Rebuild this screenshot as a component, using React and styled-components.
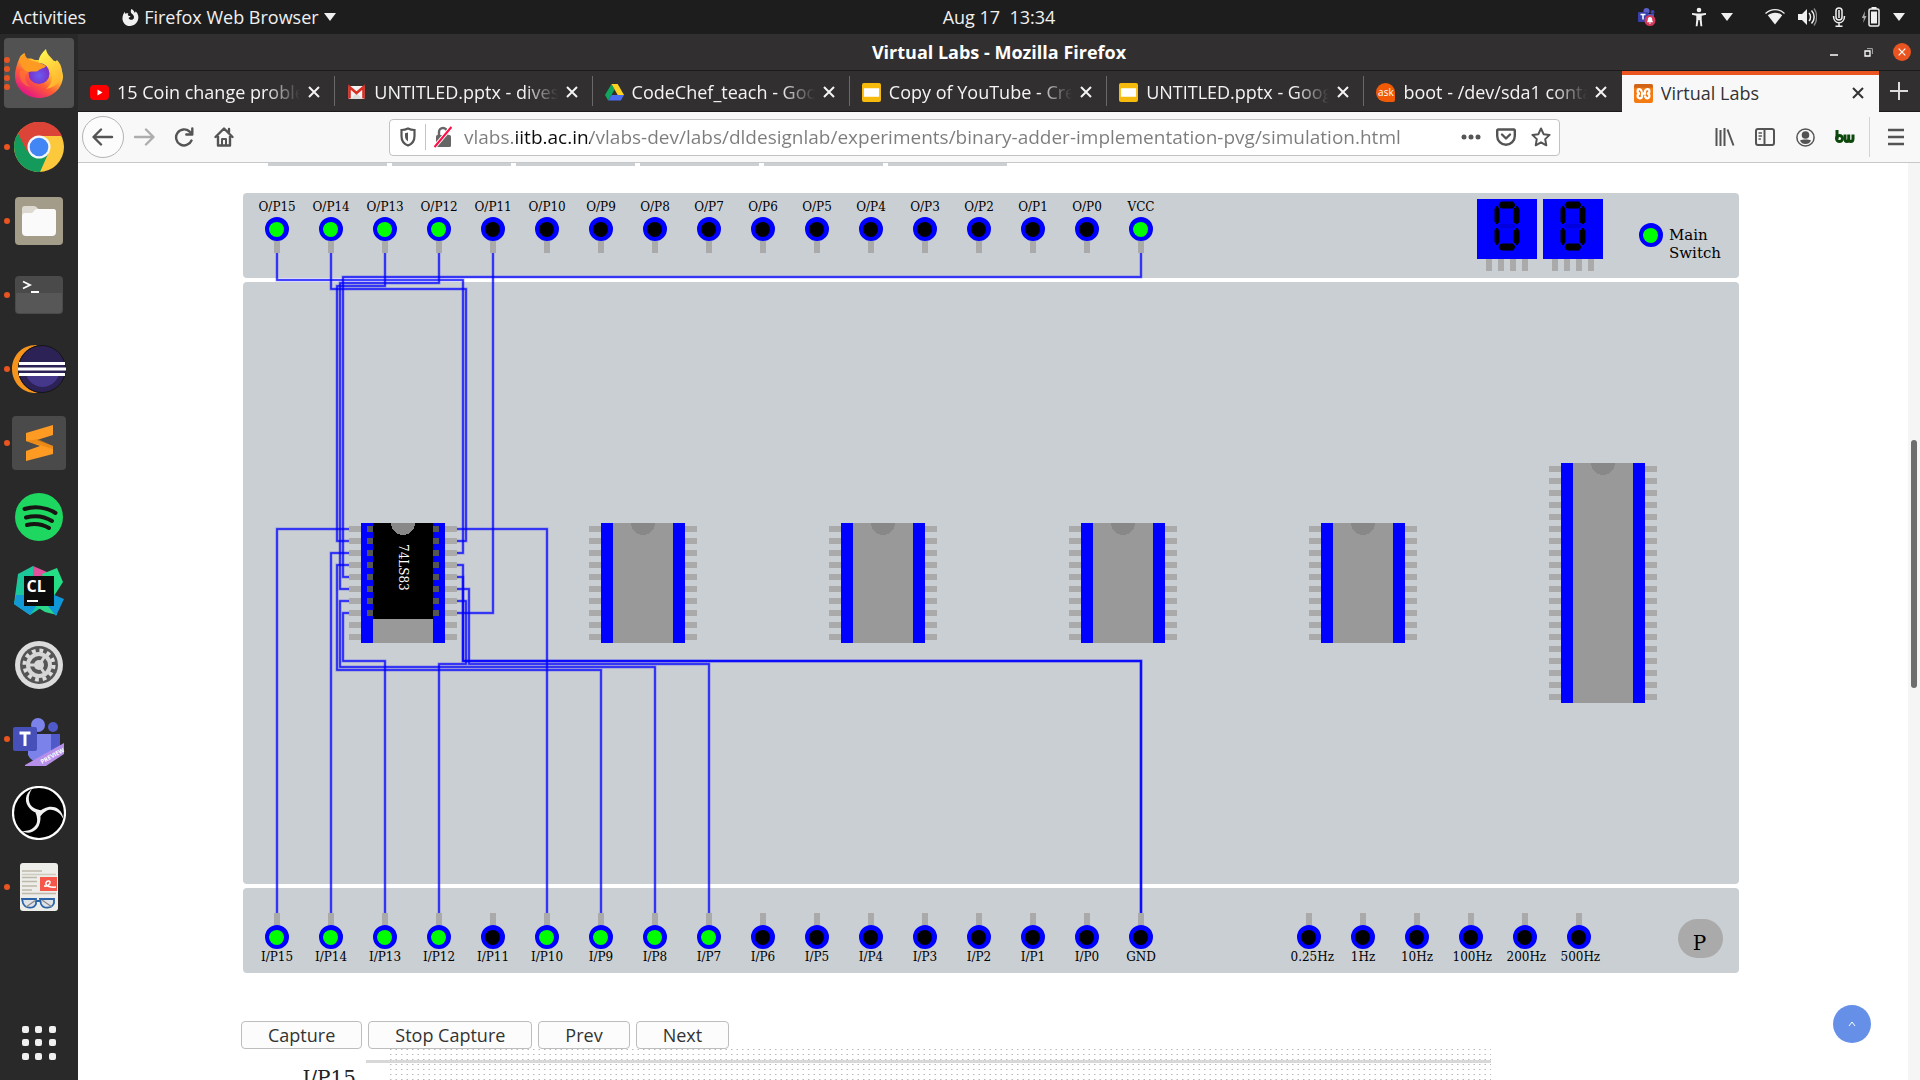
import React, { useState } from "react";
import styled, { createGlobalStyle, css } from "styled-components";

const SANS = '"Open Sans", "Noto Sans", sans-serif';
const SERIF = '"DejaVu Serif", "Liberation Serif", serif';

const GlobalStyle = createGlobalStyle`
  *, *::before, *::after { box-sizing: border-box; }
  body { margin: 0; background: #fff; font: 18px/24px ${SANS}; overflow: hidden; }
  button { font: inherit; color: inherit; margin: 0; padding: 0; border: 0; background: none; cursor: pointer; }
  svg { display: block; flex: none; }
`;

/* ---------- desktop shell ---------- */

const Desktop = styled.div`
  display: flex;
  flex-direction: column;
  height: 100vh;
`;

const TopBar = styled.header`
  display: grid;
  grid-template-columns: 1fr auto 1fr;
  align-items: center;
  flex: none;
  height: 34px;
  padding-left: 78px;
  background: #1d1d1d;
  color: #f0f0f0;
  line-height: 34px;
`;

const TopLeft = styled.div`
  display: flex;
  align-items: center;
  gap: 36px;
  margin-left: -66px;
`;

const AppMenu = styled.button`
  display: flex;
  align-items: center;
  gap: 5px;
`;

const Clock = styled.time`
  white-space: pre;
`;

const TopRight = styled.div`
  display: flex;
  justify-content: flex-end;
  align-items: center;
  gap: 32px;
  padding-right: 15px;
`;

const StatusGroup = styled.div`
  display: flex;
  align-items: center;
  gap: 12px;
`;

const Body = styled.div`
  display: flex;
  flex: 1;
  min-height: 0;
`;

const Dock = styled.nav`
  display: flex;
  flex-direction: column;
  gap: 4px;
  flex: none;
  width: 78px;
  padding: 4px;
  background: #292929;
`;

const DockItem = styled.button`
  position: relative;
  display: grid;
  place-items: center;
  height: 70px;
  border-radius: 4px;
  background: ${(p) => (p.$active ? "#525252" : "transparent")};
  ${(p) => p.$last && css`margin-top: auto; margin-bottom: -2px;`}
`;

const Dots = styled.span`
  position: absolute;
  left: 0;
  top: 0;
  bottom: 0;
  display: flex;
  flex-direction: column;
  justify-content: center;
  gap: 3px;
  i {
    width: 6px;
    height: 6px;
    border-radius: 50%;
    background: #e95420;
  }
`;

/* ---------- browser window ---------- */

const Window = styled.main`
  display: flex;
  flex-direction: column;
  flex: 1;
  min-width: 0;
`;

const TitleBar = styled.div`
  display: grid;
  grid-template-columns: 1fr auto 1fr;
  align-items: center;
  flex: none;
  height: 37px;
  background: #322f30;
  border-bottom: 1px solid #1c1b1b;
  color: #fff;
  h1 {
    grid-column: 2;
    margin: 0;
    font-size: 18px;
    font-weight: 700;
  }
`;

const WindowButtons = styled.div`
  display: flex;
  justify-content: flex-end;
  gap: 16px;
  padding-right: 9px;
`;

const WindowButton = styled.button`
  display: grid;
  place-items: center;
  width: 18px;
  height: 18px;
  border-radius: 50%;
  background: ${(p) => (p.$close ? "#e95420" : "transparent")};
`;

const TabStrip = styled.div`
  display: flex;
  flex: none;
  height: 41px;
  background: #322f30;
  color: #f4f4f4;
`;

const Tab = styled.div`
  display: flex;
  align-items: center;
  gap: 8px;
  flex: 1;
  min-width: 0;
  padding: 2px 15px 0 12px;
  border-bottom: 1px solid #1c1b1b;
  background: linear-gradient(#6a6868, #6a6868) right / 1px 30px no-repeat;
  ${(p) => p.$plain && css`background: none;`}
  ${(p) => p.$active && css`
    background: #f8f8f8;
    color: #333;
    border-top: 4px solid #e95420;
    border-bottom: 3px solid #f8f8f8;
  `}
`;

const TabTitle = styled.button`
  flex: 1;
  min-width: 0;
  overflow: hidden;
  text-align: left;
  white-space: nowrap;
  ${(p) => p.$fade && css`mask-image: linear-gradient(to left, transparent, #000 34px);`}
`;

const NewTab = styled.button`
  display: grid;
  place-items: center;
  width: 41px;
  border-bottom: 1px solid #1c1b1b;
`;

const Toolbar = styled.div`
  display: flex;
  align-items: center;
  flex: none;
  height: 51px;
  padding: 0 13px 0 4px;
  background: #f8f8f8;
  border-bottom: 1px solid #c8c8c8;
  color: #545454;
`;

const BackButton = styled.button`
  display: grid;
  place-items: center;
  width: 42px;
  height: 42px;
  margin-right: 9px;
  border: 1px solid #b4b4b4;
  border-radius: 50%;
  background: #fcfcfc;
`;

const ToolGroup = styled.div`
  display: flex;
  align-items: center;
  gap: 18px;
`;

const IconButton = styled.button`
  display: grid;
  place-items: center;
  width: 22px;
  height: 24px;
  opacity: ${(p) => (p.$dim ? 0.45 : 1)};
`;

const MenuArea = styled.div`
  margin-left: 13px;
  padding: 8px 0 8px 15px;
  border-left: 1px solid #d4d4d4;
`;

const UrlBar = styled.div`
  display: flex;
  align-items: center;
  flex: 1;
  gap: 13px;
  height: 37px;
  margin: 0 154px;
  padding: 0 7px;
  border: 1px solid #c2c2c2;
  border-radius: 4px;
  background: #fff;
`;

const UrlIdentity = styled.div`
  display: flex;
  align-items: center;
  gap: 6px;
`;

const Divider = styled.span`
  width: 1px;
  height: 26px;
  background: #c4c4c4;
`;

const UrlInput = styled.input`
  flex: 1;
  min-width: 0;
  height: 30px;
  margin-left: -3px;
  padding: 0;
  border: 0;
  outline: 0;
  font: 19px/30px ${SANS};
  color: transparent;
  background: linear-gradient(to right, #7c7c7c 52px, #0c0c0c 52px, #0c0c0c 126px, #7c7c7c 126px);
  background-clip: text;
  -webkit-background-clip: text;
`;

/* ---------- page ---------- */

const Viewport = styled.div`
  display: flex;
  flex: 1;
  min-height: 0;
`;

const Page = styled.div`
  position: relative;
  flex: 1;
  min-width: 0;
  overflow: hidden;
  background: #fff;
`;

const Scrollbar = styled.div`
  width: 12px;
  padding: 277px 3px 0;
  background: #f5f5f5;
  &::before {
    content: "";
    display: block;
    height: 248px;
    border-radius: 3px;
    background: #6e6e6e;
  }
`;

const Content = styled.div`
  width: 1504px;
  margin: 0 auto;
`;

const PageTabs = styled.div`
  display: flex;
  gap: 5px;
  padding-left: 27px;
  span {
    width: 119px;
    height: 3px;
    background: #cccfd1;
  }
`;

const Board = styled.section`
  position: relative;
  display: flex;
  flex-direction: column;
  gap: 4px;
  width: 1496px;
  margin: 27px 0 48px 2px;
  font-family: ${SERIF};
  color: #000;
`;

const Panel = styled.div`
  display: flex;
  align-items: ${(p) => (p.$center ? "center" : "flex-start")};
  justify-content: ${(p) => (p.$center ? "space-between" : "flex-start")};
  height: ${(p) => p.$height}px;
  padding: ${(p) => p.$pad};
  border-radius: 4px;
  background: #cacfd3;
`;

const Ports = styled.div`
  display: flex;
  & + & { margin-left: 114px; }
`;

const Port = styled.div`
  display: flex;
  flex-direction: ${(p) => (p.$flip ? "column-reverse" : "column")};
  align-items: center;
  width: 54px;
`;

const PortLabel = styled.span`
  display: flex;
  justify-content: safe center;
  width: 37px;
  margin: 1px 0 3px;
  font-size: 12px;
  line-height: 14px;
  white-space: nowrap;
`;

const Led = styled.button`
  flex: none;
  width: 24px;
  height: 24px;
  border: solid #00f;
  border-width: 5px 5px 4px 4px;
  border-radius: 50%;
  background: ${(p) => (p.$on ? "#0f0" : "#000")};
`;

const Pin = styled.span`
  width: ${(p) => (p.$side ? 12 : 6)}px;
  height: ${(p) => (p.$side ? 6 : 12)}px;
  background: #aaa;
`;

const Readout = styled.div`
  display: flex;
  gap: 6px;
  margin-left: auto;
`;

const Digit = styled.div`
  display: flex;
  flex-direction: column;
  svg { background: #00f; }
`;

const DigitPins = styled.div`
  display: flex;
  gap: 6px;
  padding-left: 9px;
`;

const MainSwitch = styled.label`
  display: flex;
  gap: 6px;
  margin: 24px 0 0 36px;
  font-size: 15px;
  line-height: 18px;
  span {
    width: 54px;
    padding-top: 3px;
  }
`;

const Socket = styled.div`
  position: relative;
  display: flex;
`;

const PinColumn = styled.div`
  display: flex;
  flex-direction: column;
  gap: 6px;
  padding: 3px 0;
`;

const SocketBody = styled.div`
  width: 84px;
  border: solid #00f;
  border-width: 0 12px;
  background: radial-gradient(circle at 50% 0, #888 12px, #999 12px);
`;

const Ic = styled.div`
  position: absolute;
  top: 0;
  left: 18px;
  display: flex;
  height: 96px;
  font-size: 12px;
  color: #fff;
`;

const IcBody = styled.div`
  display: flex;
  align-items: center;
  justify-content: center;
  width: 60px;
  background: radial-gradient(circle at 50% 0, #888 12px, #000 12px);
  span {
    writing-mode: vertical-rl;
    line-height: 14px;
    padding-bottom: 8px;
  }
`;

const Leg = styled.span`
  width: 6px;
  height: 6px;
  background: #555;
`;

const Wires = styled.svg`
  position: absolute;
  inset: 0;
  pointer-events: none;
`;

const PulseButton = styled.button`
  width: 45px;
  height: 39px;
  margin: 6px 0 0 auto;
  padding: 8px 2px 0 0;
  border-radius: 20px;
  background: #aaa;
  font-size: 20px;
  line-height: 30px;
`;

const CaptureBar = styled.div`
  display: flex;
  gap: 6px;
`;

const CaptureButton = styled.button`
  height: 28px;
  padding: 0 26px;
  border: 1px solid #bdbdbd;
  border-radius: 4px;
  background: #fcfcfc;
  color: #333;
  line-height: 26px;
`;

const Waveforms = styled.div`
  display: flex;
  gap: 10px;
`;

const WaveLabel = styled.span`
  width: 115px;
  padding-top: 18px;
  text-align: right;
  font: 20px/22px ${SERIF};
  color: #222;
`;

const ToTop = styled.button`
  position: absolute;
  right: 37px;
  bottom: 37px;
  display: grid;
  place-items: center;
  width: 38px;
  height: 38px;
  border-radius: 50%;
  background: #6690e8;
`;

/* ---------- small icons ---------- */

const line = { fill: "none", stroke: "currentColor", strokeWidth: 2.4, strokeLinecap: "round", strokeLinejoin: "round" };

const Caret = () => (
  <svg width="12" height="8" viewBox="0 0 12 8"><path d="M0 0h12L6 8z" fill="#f0f0f0" /></svg>
);
const Cross = ({ size = 12, width = 2 }) => (
  <svg width={size} height={size} viewBox="0 0 12 12"><path d="M1 1l10 10M11 1L1 11" stroke="currentColor" strokeWidth={width} /></svg>
);
const FlameGlyph = () => (
  <svg width="17" height="17" viewBox="0 0 18 18">
    <path fill="#f0f0f0" d="M10 0c2 1 3 2.500 3.400 4 .8-.2 1-1 1-1.500C17 5 18 8 17 11.500 15.500 16 12 18 8.500 18 3.500 18 .5 14 .5 10c0-3 1-5 2.500-7 0 1 .2 1.600.8 2 .8-.5 2-.6 3-.4-.8 1-.8 2 .2 2.600.8.5 1.500.3 2 .4-.3 1-1.500 1-2 1.900.6 2.500 4.500 2.500 5.500.3C13.500 7 11 6 9.600 4 9 2.600 9.300 1 10 0z" />
  </svg>
);

const TeamsTray = () => (
  <svg width="20" height="20" viewBox="0 0 20 20">
    <circle cx="9.500" cy="4" r="3" fill="#5b5fc7" /><circle cx="15.500" cy="5" r="2" fill="#3e44a8" />
    <path d="M9 7h8v6a5 5 0 01-8 3z" fill="#4b53bc" />
    <rect x="1" y="5" width="10" height="10" rx="1" fill="#3940ab" />
    <path d="M3.500 7.500h5M6 7.500v5" stroke="#fff" strokeWidth="1.500" />
    <circle cx="13" cy="13.500" r="5.500" fill="#d13a5a" />
    <path d="M13 10c-1.800 0-2.200 1.400-2.200 3l-.8 2.200h6L15.200 13c0-1.600-.4-3-2.200-3zm-1 5.800h2a1 1 0 01-2 0z" fill="#fff" />
  </svg>
);
const Person = () => (
  <svg width="20" height="20" viewBox="0 0 20 20" fill="#f0f0f0">
    <circle cx="10" cy="3" r="2.300" />
    <path d="M3 6l5 .6h4L17 6v1.800l-4.300.9v4l.6 6.500h-1.800L10.600 13H9.400l-.9 6.200H6.700l.6-6.500v-4L3 7.800z" />
  </svg>
);
const Wifi = () => (
  <svg width="20" height="20" viewBox="0 0 20 20">
    <path d="M.5 6.500C6 1.200 14 1.200 19.500 6.500" fill="none" stroke="#f0f0f0" strokeWidth="1.200" />
    <path d="M2.800 8.300C7 4.800 13 4.800 17.200 8.300L10 17.500z" fill="#f0f0f0" />
  </svg>
);
const Sound = () => (
  <svg width="20" height="20" viewBox="0 0 20 20">
    <path d="M1 7h4l5-5v16l-5-5H1z" fill="#f0f0f0" />
    <path d="M12 6c2 2 2 6 0 8M14.500 3.500c3.500 3.500 3.500 9.500 0 13" fill="none" stroke="#f0f0f0" strokeWidth="1.500" />
    <path d="M17 1.500c3.500 4.500 3.500 12.500 0 17" fill="none" stroke="#888" strokeWidth="1.300" />
  </svg>
);
const Mic = () => (
  <svg width="20" height="20" viewBox="0 0 20 20" fill="none" stroke="#f0f0f0" strokeWidth="1.500">
    <rect x="7" y="1" width="6" height="12" rx="3" /><path d="M10 3v8M4.500 9c0 9 11 9 11 0M10 15.500V19M6.500 19.200h7" />
  </svg>
);
const Battery = () => (
  <svg width="20" height="20" viewBox="0 0 20 20">
    <path d="M4 4L.8 11h2l-.6 5L5.500 9h-2z" fill="#aaa" />
    <rect x="8" y="2" width="10" height="17" rx="1.500" fill="none" stroke="#f0f0f0" strokeWidth="1.500" />
    <path d="M10.500 0h5v2h-5zM10 4.500h6v12h-6z" fill="#f0f0f0" />
  </svg>
);

const Youtube = () => (
  <svg width="19" height="19" viewBox="0 0 19 19"><rect y="2" width="19" height="15" rx="4" fill="#f00" /><path d="M7.500 6.500v6l5-3z" fill="#fff" /></svg>
);
const Gmail = () => (
  <svg width="19" height="18" viewBox="0 0 18 18">
    <rect x="1" y="3" width="16" height="13" rx="1" fill="#f3f3f3" /><path d="M3 16l6-6 6 6z" fill="#ddd" />
    <path d="M2 15.500V4l7 6 7-6v11.500" fill="none" stroke="#d93025" strokeWidth="2.600" />
  </svg>
);
const Drive = () => (
  <svg width="19" height="18" viewBox="0 0 19 18">
    <path d="M6.500 1L0 12l3.200 5.500L9.600 6.400z" fill="#11a65c" /><path d="M6.500 1h6.200L19 12h-6.300z" fill="#ffd322" />
    <path d="M3.200 17.500L6.400 12H19l-3.200 5.500z" fill="#4a6cf0" />
  </svg>
);
const Slides = () => (
  <svg width="19" height="19" viewBox="0 0 20 20"><rect width="20" height="20" rx="2" fill="#f5ba0c" /><rect x="2" y="5.500" width="16" height="9" fill="#fff" /></svg>
);
const AskText = styled.span`
  display: grid;
  place-items: center;
  flex: none;
  width: 19px;
  height: 19px;
  border-radius: 50% 50% 2px 50%;
  background: #f25a05;
  color: #fff;
  font-size: 10px;
  line-height: 16px;
`;
const Xampp = () => (
  <svg width="19" height="19" viewBox="0 0 20 20">
    <rect width="20" height="20" rx="2" fill="#f47a12" /><path d="M0 2a2 2 0 012-2h16a2 2 0 012 2v2H0z" fill="#b9561a" opacity=".6" />
    <g fill="none" stroke="#fff" strokeWidth="2.400" strokeLinecap="round">
      <path d="M8 7.500C7 4.500 3.800 5 3.800 7.500c0 1.500 1 2.500 2.500 2.500-1.500 0-2.500 1.200-2.500 2.700C3.800 15.500 8 16 8.500 13V10" />
      <path d="M8.500 10h3.200" />
      <path d="M11.500 10V7.500c1-3 4.700-2.500 4.700 0 0 1.500-1 2.500-2.500 2.500 1.500 0 2.500 1.200 2.500 2.700 0 2.800-3.700 3.300-4.500.3" />
    </g>
  </svg>
);

/* ---------- dock icons ---------- */

const Firefox = () => (
  <svg width="48" height="49" viewBox="0 0 48 49">
    <defs>
      <linearGradient id="fx1" x1=".85" y1=".1" x2=".25" y2=".95"><stop offset="0" stopColor="#fff04a" /><stop offset=".35" stopColor="#ffbd2e" /><stop offset=".65" stopColor="#ff5a38" /><stop offset="1" stopColor="#e31587" /></linearGradient>
      <linearGradient id="fx2" x1=".3" y1="0" x2=".7" y2="1"><stop offset="0" stopColor="#fff44f" /><stop offset="1" stopColor="#ffad29" /></linearGradient>
      <radialGradient id="fx3" cx=".5" cy=".6"><stop offset="0" stopColor="#6a5cf0" /><stop offset="1" stopColor="#7b2fc9" /></radialGradient>
    </defs>
    <path d="M5 8c1-2 3-3 4.500-4C9 7 10 9 12 10c3-1 6 0 8 1h12l8 1c5 4 8 10 8 16-1 12-11 21-24 21S0 39 0 27C0 20 3 12 5 8z" fill="url(#fx1)" />
    <path d="M31 0c-5 5-8 9-7 14 8 2 13 6 13 14 0 5-2 9-6 12 10-2 16-8 16-17 0-5-2-9-5-12-1 1-2 2-2 3-2-5-8-7-9-14z" fill="url(#fx2)" />
    <circle cx="24" cy="24.500" r="10.500" fill="url(#fx3)" />
    <path d="M14 21C9 25 9 34 16 38c-8-1-13-8-11-16z" fill="#ff7a30" opacity=".6" />
    <path d="M5 9l5-5c0 4 2 6 8 8 4 1 8 2 13 5-2 3-6 2-8 5-3 1-6 0-9 1-5-1-9-5-9-14z" fill="#ff9a22" />
  </svg>
);
const Chrome = () => (
  <svg width="50" height="50" viewBox="0 0 50 50">
    <circle cx="25" cy="25" r="25" fill="#fdc93c" />
    <path d="M25 25L4 11.500A25 25 0 0026 50L34 32z" fill="#149a5a" />
    <path d="M4 11.500A25 25 0 0148 14H25L14 31z" fill="#dc4437" />
    <circle cx="25" cy="25" r="11.500" fill="#f4f6fa" /><circle cx="25" cy="25" r="9.300" fill="#4285f4" />
  </svg>
);
const Files = () => (
  <svg width="48" height="48" viewBox="0 0 48 48">
    <rect width="48" height="48" rx="4" fill="#a39c88" />
    <path d="M7 12a3 3 0 013-3h9c3 0 3 3 5 3h14a3 3 0 013 3v5H7z" fill="#ddd9d0" />
    <path d="M7 19c0-2 1-3 3-3h6c3 0 3-4 6-4h16a3 3 0 013 3v20a4 4 0 01-4 4H11a4 4 0 01-4-4z" fill="#fafafa" />
  </svg>
);
const Terminal = () => (
  <svg width="48" height="38" viewBox="0 0 48 38">
    <rect width="48" height="38" rx="4" fill="#4a4a4a" /><path d="M1 17h46v17a3 3 0 01-3 3H4a3 3 0 01-3-3z" fill="#575757" />
    <path d="M8 5.500l7 3.500-7 3.500M16 16h8" fill="none" stroke="#fff" strokeWidth="1.800" />
  </svg>
);
const Eclipse = () => (
  <svg width="54" height="50" viewBox="0 0 54 50">
    <path d="M26 1C10 0 0 12 0 25s10 25 26 24C14 46 6 37 6 25S14 4 26 1z" fill="#f7941e" />
    <circle cx="30" cy="25" r="23.500" fill="#2c2255" stroke="#151515" strokeWidth="1" /><path d="M14 30a17 17 0 0033 0z" fill="#45378a" />
    <path d="M7 19.500h46M6 25h48M7 30.500h46" stroke="#fff" strokeWidth="3" />
  </svg>
);
const Sublime = () => (
  <svg width="54" height="54" viewBox="0 0 54 54">
    <rect width="54" height="54" rx="4" fill="#4a4a4a" />
    <path d="M41 9v10L25 24l16 6v8L14 45V35l14-5-14-5V17z" fill="#ff9b22" /><path d="M14 25l12-2 15 7v3z" fill="#e07f10" opacity=".6" />
  </svg>
);
const Spotify = () => (
  <svg width="48" height="48" viewBox="0 0 48 48">
    <circle cx="24" cy="24" r="24" fill="#1ed760" />
    <path d="M9.500 16c10-3 22-2 31 4M11 24.500c9-2.500 18-1.500 26 3.500M12 32c8-2 15-1 22 3" fill="none" stroke="#191414" strokeWidth="4" strokeLinecap="round" />
  </svg>
);
const CLion = () => (
  <svg width="50" height="50" viewBox="0 0 50 50">
    <path d="M19 0L4 8 0 38l16 11 14-9z" fill="#1cc79a" /><path d="M0 38l16 11 14-20H2z" fill="#139ad6" />
    <path d="M19 0l14 6-3 12H19z" fill="#e0509c" /><path d="M28 8l15-6 6 14-9 14-8-10z" fill="#24dd84" />
    <path d="M18 38h22l3 11-12-3z" fill="#2bd68a" /><path d="M38 28l12 5-8 17-8-10z" fill="#0f96d8" />
    <rect x="10" y="10" width="30" height="30" fill="#0c0c0c" /><rect x="13" y="34" width="11" height="2" fill="#fff" />
    <text x="12.500" y="26" fontFamily="Open Sans" fontWeight="700" fontSize="16" fill="#fff">CL</text>
  </svg>
);
const Settings = () => (
  <svg width="48" height="48" viewBox="0 0 48 48">
    <circle cx="24" cy="24" r="24" fill="#dcdcdc" /><circle cx="24" cy="24" r="19" fill="#555" />
    <circle cx="24" cy="24" r="14.500" fill="none" stroke="#ddd" strokeWidth="4" strokeDasharray="3.800 3.790" />
    <circle cx="24" cy="24" r="11" fill="none" stroke="#d6d6d6" strokeWidth="4" />
    <circle cx="24" cy="24" r="5" fill="#d6d6d6" /><path d="M24 24h-10M24 24l6-9M24 24l6 9" stroke="#d6d6d6" strokeWidth="3" />
  </svg>
);
const Teams = () => (
  <svg width="52" height="54" viewBox="0 -6 52 54">
    <circle cx="25" cy="7" r="7" fill="#7b83eb" /><circle cx="40" cy="9" r="5" fill="#5059c9" />
    <path d="M30 16h17v15a10 10 0 01-14 7z" fill="#5059c9" /><path d="M15 16h23v18a12 12 0 01-23 3z" fill="#7b83eb" />
    <rect y="9" width="24" height="24" rx="2" fill="#4750b8" /><path d="M6.500 15h11M12 15v13" stroke="#fff" strokeWidth="3" />
    <path d="M12 47l39-22v11L33 48H12z" fill="#b58fe8" />
    <text x="29" y="46" transform="rotate(-29 29 46)" fontFamily="Open Sans" fontWeight="700" fontSize="6" fill="#fff">PREVIEW</text>
  </svg>
);
const Obs = () => (
  <svg width="54" height="54" viewBox="0 0 54 54">
    <circle cx="27" cy="27" r="26" fill="#000" stroke="#fff" strokeWidth="2.200" />
    {[0, 120, 240].map((a) => (
      <path key={a} transform={`rotate(${a} 27 27)`} d="M27 28C20 26 13 20 14 12c.5-4 3-7 6-9-5 7-4 16 2 19 3 1.500 5 2 7 2z" fill="#f2f2f2" />
    ))}
  </svg>
);
const Reader = () => (
  <svg width="38" height="48" viewBox="0 0 38 48">
    <rect width="38" height="48" rx="3" fill="#ededea" />
    <path d="M2 8h20M2 14.500h15M2 18.500h15M2 23h15M2 27h10M2 30.500h34" stroke="#bdb8a8" strokeWidth="1.600" /><path d="M2 11.500h34" stroke="#cfcbbf" strokeWidth="1.400" />
    <rect x="20" y="14" width="17" height="14" fill="#f5584a" /><path d="M24 23c6 1 8-6 4-5s-3 7 8 6" fill="none" stroke="#fff" strokeWidth="1.500" />
    <path d="M2 36h14v5c-2 5-11 5-13-1zM20 36h14v4c-2 6-11 6-13 1zM16 38h4" fill="#dfe3e8" stroke="#2a63a8" strokeWidth="1.800" />
    <path d="M6 44l10-7M22 37l10 7" stroke="#888" strokeWidth="1.200" />
  </svg>
);
const AppGrid = () => (
  <svg width="34" height="34" viewBox="0 0 34 34" fill="#f0f0f0">
    {[0, 13, 27].map((x) => [0, 13, 27].map((y) => <rect key={x + "-" + y} x={x} y={y} width="7" height="7" rx="2" />))}
  </svg>
);

/* ---------- data ---------- */

const DOCK = [
  { name: "Firefox", icon: Firefox, dots: 4, active: true },
  { name: "Chrome", icon: Chrome, dots: 1 },
  { name: "Files", icon: Files, dots: 1 },
  { name: "Terminal", icon: Terminal, dots: 1 },
  { name: "Eclipse", icon: Eclipse, dots: 1 },
  { name: "Sublime Text", icon: Sublime, dots: 1 },
  { name: "Spotify", icon: Spotify, dots: 0 },
  { name: "CLion", icon: CLion, dots: 0 },
  { name: "Settings", icon: Settings, dots: 0 },
  { name: "Teams", icon: Teams, dots: 1 },
  { name: "OBS Studio", icon: Obs, dots: 0 },
  { name: "Document Viewer", icon: Reader, dots: 1 },
];

const TABS = [
  { icon: <Youtube />, title: "15 Coin change problem" },
  { icon: <Gmail />, title: "UNTITLED.pptx - divesh" },
  { icon: <Drive />, title: "CodeChef_teach - Google" },
  { icon: <Slides />, title: "Copy of YouTube - Create" },
  { icon: <Slides />, title: "UNTITLED.pptx - Google" },
  { icon: <AskText>ask</AskText>, title: "boot - /dev/sda1 contains" },
  { icon: <Xampp />, title: "Virtual Labs", active: true },
];

const channels = (prefix) => Array.from({ length: 16 }, (_, i) => `${prefix}${15 - i}`);
const OUTPUTS = [...channels("O/P"), "VCC"];
const INPUTS = [...channels("I/P"), "GND"];
const CLOCKS = ["0.25Hz", "1Hz", "10Hz", "100Hz", "200Hz", "500Hz"];
const LIT = ["O/P15", "O/P14", "O/P13", "O/P12", "VCC", "I/P15", "I/P14", "I/P13", "I/P12", "I/P10", "I/P9", "I/P8", "I/P7"];

const WIRES = [
  "M34 60V87H220V360H214",
  "M88 60V96H223V348H214",
  "M142 60V93H94V348H106",
  "M196 60V90H97V396H106",
  "M898 60V84H100V384H106",
  "M250 60V420H214",
  "M34 720V336H106",
  "M88 720V360H106",
  "M358 720V477H94V372H106",
  "M412 720V474H97V408H106",
  "M142 720V468H100V420H106",
  "M304 720V336H214",
  "M898 720V468H220V372H214",
  "M898 720V468H220V384H214",
  "M466 720V471H226V396H214",
  "M196 720V471H223V408H214",
];

/* ---------- parts ---------- */

const times = (n, make) => Array.from({ length: n }, (_, i) => make(i));

function PortBank({ names, flip }) {
  return (
    <Ports>
      {names.map((name) => (
        <Port key={name} $flip={flip}>
          <PortLabel id={name}>{name}</PortLabel>
          <Led aria-labelledby={name} $on={LIT.includes(name)} />
          <Pin />
        </Port>
      ))}
    </Ports>
  );
}

function SevenSegment() {
  return (
    <Digit>
      <svg width="60" height="60" viewBox="0 0 60 60">
        <path d="M24 3h12l2 3-2 3H24l-2-3zM24 45h12l2 3-2 3H24l-2-3zM20 7l2 3v13l-2 2-2-2V10zM20 29l2 3v11l-2 3-2-3V31zM40 7l2 3v13l-2 2-3-2V10zM40 29l2 3v11l-2 3-3-3V32z" fill="#000" stroke="#000" strokeWidth="1" strokeLinejoin="round" />
        <path d="M23 25h14l1 2-1 2H23l-2-2z" fill="#00d" />
      </svg>
      <DigitPins>{times(4, (i) => <Pin key={i} />)}</DigitPins>
    </Digit>
  );
}

function ChipSocket({ pins, chip }) {
  return (
    <Socket>
      <PinColumn>{times(pins, (i) => <Pin key={i} $side />)}</PinColumn>
      <SocketBody />
      <PinColumn>{times(pins, (i) => <Pin key={i} $side />)}</PinColumn>
      {chip && (
        <Ic>
          <PinColumn>{times(8, (i) => <Leg key={i} />)}</PinColumn>
          <IcBody><span>{chip}</span></IcBody>
          <PinColumn>{times(8, (i) => <Leg key={i} />)}</PinColumn>
        </Ic>
      )}
    </Socket>
  );
}

function Breadboard() {
  return (
    <Board>
      <Panel $height={85} $pad="6px 16px 0 7px">
        <PortBank names={OUTPUTS} />
        <Readout><SevenSegment /><SevenSegment /></Readout>
        <MainSwitch>
          <Led $on />
          <span>Main Switch</span>
        </MainSwitch>
      </Panel>
      <Panel $height={602} $pad="0 82px 0 106px" $center>
        <ChipSocket pins={10} chip="74LS83" />
        <ChipSocket pins={10} />
        <ChipSocket pins={10} />
        <ChipSocket pins={10} />
        <ChipSocket pins={10} />
        <ChipSocket pins={20} />
      </Panel>
      <Panel $height={85} $pad="25px 16px 0 7px">
        <PortBank names={INPUTS} flip />
        <PortBank names={CLOCKS} flip />
        <PulseButton>P</PulseButton>
      </Panel>
      <Wires width="1496" height="780" viewBox="0 0 1496 780" fill="none" stroke="#00f">
        {WIRES.map((d) => (
          <g key={d}>
            <path d={d} strokeWidth="3" strokeOpacity=".3" />
            <path d={d} strokeWidth="2" strokeOpacity=".5" />
            <path d={d} strokeWidth="1" strokeOpacity=".5" />
          </g>
        ))}
      </Wires>
    </Board>
  );
}

export default function App() {
  const [url, setUrl] = useState("vlabs.iitb.ac.in/vlabs-dev/labs/dldesignlab/experiments/binary-adder-implementation-pvg/simulation.html");
  return (
    <Desktop>
      <GlobalStyle />
      <TopBar>
        <TopLeft>
          <button>Activities</button>
          <AppMenu><FlameGlyph />Firefox Web Browser<Caret /></AppMenu>
        </TopLeft>
        <Clock>{"Aug 17  13:34"}</Clock>
        <TopRight>
          <TeamsTray />
          <StatusGroup><Person /><Caret /></StatusGroup>
          <StatusGroup><Wifi /><Sound /><Mic /><Battery /><Caret /></StatusGroup>
        </TopRight>
      </TopBar>
      <Body>
        <Dock>
          {DOCK.map(({ name, icon: Icon, dots, active }) => (
            <DockItem key={name} aria-label={name} $active={active}>
              <Dots>{times(dots, (i) => <i key={i} />)}</Dots>
              <Icon />
            </DockItem>
          ))}
          <DockItem aria-label="Show applications" $last><AppGrid /></DockItem>
        </Dock>
        <Window>
          <TitleBar>
            <h1>Virtual Labs - Mozilla Firefox</h1>
            <WindowButtons>
              <WindowButton aria-label="Minimize"><svg width="8" height="10"><path d="M0 8h8" stroke="#fff" strokeWidth="1.500" /></svg></WindowButton>
              <WindowButton aria-label="Restore"><svg width="9" height="9" viewBox="0 0 9 9"><path d="M1 3h5v5H1z" stroke="#fff" strokeWidth="1.300" fill="none" /><path d="M3 .6h5.400V6" stroke="#aaa" fill="none" /></svg></WindowButton>
              <WindowButton aria-label="Close" $close><Cross size={8} width={1.8} /></WindowButton>
            </WindowButtons>
          </TitleBar>
          <TabStrip>
            {TABS.map((tab, i) => (
              <Tab key={i} $active={tab.active} $plain={i === TABS.length - 2}>
                {tab.icon}
                <TabTitle $fade={!tab.active}>{tab.title}</TabTitle>
                <button aria-label="Close tab"><Cross /></button>
              </Tab>
            ))}
            <NewTab aria-label="New tab"><svg width="18" height="18"><path d="M9 0v18M0 9h18" stroke="#ddd" strokeWidth="2" /></svg></NewTab>
          </TabStrip>
          <Toolbar>
            <BackButton aria-label="Back"><svg width="22" height="18" viewBox="0 0 22 18" {...line}><path d="M20 9H2M9 1.500L1.500 9 9 16.500" /></svg></BackButton>
            <ToolGroup>
              <IconButton aria-label="Forward" $dim><svg width="22" height="18" viewBox="0 0 22 18" {...line}><path d="M2 9h18M13 1.500L20.500 9 13 16.500" /></svg></IconButton>
              <IconButton aria-label="Reload"><svg width="20" height="20" viewBox="0 0 20 20" {...line}><path d="M17.500 13.500A8 8 0 1115.500 4.500L18 7M18.300 1.500V7.500H12.300" /></svg></IconButton>
              <IconButton aria-label="Home"><svg width="20" height="20" viewBox="0 0 20 20" {...line}><path d="M1.500 10L10 1.500 18.500 10M4 9v9.500h12V9M15 2v3" /><path d="M8 18v-6h4v6" strokeWidth="2" /></svg></IconButton>
            </ToolGroup>
            <UrlBar>
              <UrlIdentity>
                <IconButton aria-label="Tracking protection"><svg width="16" height="20" viewBox="0 0 16 20" fill="none" stroke="#555" strokeWidth="2.200"><path d="M8 1.500C6 2.500 4 3 1.500 3v6c0 4.500 2.500 8 6.500 9.500 4-1.500 6.500-5 6.500-9.500V3C12 3 10 2.500 8 1.500z" /><path d="M8 5.500v9c-2-1.500-3-3-3-5.500V6.300z" fill="#555" stroke="none" /></svg></IconButton>
                <Divider />
                <IconButton aria-label="Connection is not secure"><svg width="18" height="22" viewBox="0 0 18 22"><path d="M5 10V6a4 4 0 018 0v4" fill="none" stroke="#666" strokeWidth="2.400" /><rect x="2" y="9" width="15" height="12" rx="1.500" fill="#666" /><path d="M17.500 1L.5 21" stroke="#fff" strokeWidth="4" /><path d="M17.500 1L.5 21" stroke="#ff0d45" strokeWidth="2.200" /></svg></IconButton>
              </UrlIdentity>
              <UrlInput aria-label="Address" value={url} onChange={(e) => setUrl(e.target.value)} />
              <IconButton aria-label="Page actions"><svg width="20" height="6" fill="#555"><circle cx="3" cy="3" r="2.500" /><circle cx="10" cy="3" r="2.500" /><circle cx="17" cy="3" r="2.500" /></svg></IconButton>
              <IconButton aria-label="Save to Pocket"><svg width="20" height="18" viewBox="0 0 20 18" {...line}><path d="M2 1.500h16a.8.8 0 01.8.8V8a8.800 8.800 0 01-17.600 0V2.300A.8.8 0 012 1.500zM6 6.500l4 4 4-4" /></svg></IconButton>
              <IconButton aria-label="Bookmark"><svg width="20" height="20" viewBox="0 0 20 20" {...line} strokeWidth="2"><path d="M10 1.500l2.600 5.700 6 .7-4.400 4.200 1.100 6.200L10 15.300l-5.300 3 1.100-6.200L1.400 7.900l6-.7z" /></svg></IconButton>
            </UrlBar>
            <ToolGroup>
              <IconButton aria-label="Library"><svg width="20" height="18" viewBox="0 0 20 18" stroke="#545454" strokeWidth="2"><path d="M1.500 0v18M5.500 2v16M9.500 0v18M12.500 1.500L18.500 17.500" /></svg></IconButton>
              <IconButton aria-label="Sidebar"><svg width="20" height="18" viewBox="0 0 20 18" {...line} strokeWidth="2"><rect x="1" y="1" width="18" height="16" rx="2" /><path d="M9.500 1v16" /><path d="M4 5h2.500M4 8h2.500M4 11h1.500" strokeWidth="1.300" /></svg></IconButton>
              <IconButton aria-label="Account"><svg width="19" height="19" viewBox="0 0 19 19"><circle cx="9.500" cy="9.500" r="8.600" fill="none" stroke="#545454" strokeWidth="1.500" /><circle cx="9.500" cy="7" r="3.800" fill="#545454" /><path d="M4 12.500c1.500-1 3-1 5.500-1s4 0 5.500 1c-1 2.500-3 3.500-5.500 3.500S5 15 4 12.500z" fill="#545454" /></svg></IconButton>
              <IconButton aria-label="BuiltWith"><svg width="20" height="14" viewBox="0 0 20 14" fill="none" stroke="#0c480c" strokeWidth="3"><path d="M2 0v9" /><circle cx="4.500" cy="8.500" r="3" /><path d="M10 4.500v4c0 4 3.700 4 3.700 0v-4M13.700 8.500c0 4 4.300 4 4.300 0v-4" /></svg></IconButton>
            </ToolGroup>
            <MenuArea>
              <IconButton aria-label="Menu"><svg width="16" height="18" viewBox="0 0 16 18" stroke="#545454" strokeWidth="2.400"><path d="M0 2h16M0 9h16M0 16h16" /></svg></IconButton>
            </MenuArea>
          </Toolbar>
          <Viewport>
            <Page>
              <Content>
                <PageTabs>{times(6, (i) => <span key={i} />)}</PageTabs>
                <Breadboard />
                <CaptureBar>
                  <CaptureButton>Capture</CaptureButton>
                  <CaptureButton>Stop Capture</CaptureButton>
                  <CaptureButton>Prev</CaptureButton>
                  <CaptureButton>Next</CaptureButton>
                </CaptureBar>
                <Waveforms>
                  <WaveLabel>I/P15</WaveLabel>
                  <svg width="1125" height="60" viewBox="0 0 1125 60">
                    <defs>
                      <pattern id="grid" x="2" width="11" height="5" patternUnits="userSpaceOnUse">
                        <rect width="1.500" height="1" fill="#bbb" /><rect x="5.500" width="1.500" height="1" fill="#bbb" />
                      </pattern>
                    </defs>
                    <rect x="23" width="1102" height="60" fill="url(#grid)" />
                    <rect y="11" width="1125" height="3" fill="#d8d8d8" />
                  </svg>
                </Waveforms>
              </Content>
              <ToTop aria-label="Back to top"><svg width="8" height="6"><path d="M1 5l3-4 3 4" fill="none" stroke="#fff" /></svg></ToTop>
            </Page>
            <Scrollbar />
          </Viewport>
        </Window>
      </Body>
    </Desktop>
  );
}
